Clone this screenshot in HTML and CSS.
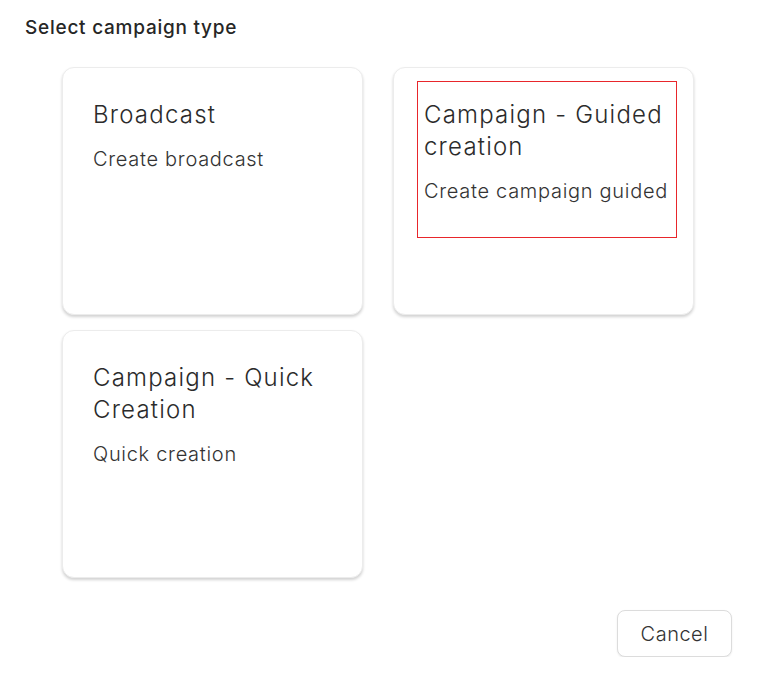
FILE: index.html
```html
<!DOCTYPE html>
<html lang="en">
<head>
    <meta charset="UTF-8">
    <meta name="viewport" content="width=device-width, initial-scale=1.0">
    <title>Select campaign type</title>
    <link rel="stylesheet" href="styles.css">
</head>
<body>
    <div class="dialog">
        <h2 class="dialog-title">Select campaign type</h2>

        <!-- Campaign type cards -->
        <div class="type-grid">
            <div class="type-card">
                <div class="type-content">
                    <h3 class="type-title">Broadcast</h3>
                    <p class="type-desc">Create broadcast</p>
                </div>
            </div>
            <div class="type-card">
                <div class="type-content focused">
                    <h3 class="type-title">Campaign - Guided creation</h3>
                    <p class="type-desc">Create campaign guided</p>
                </div>
            </div>
            <div class="type-card">
                <div class="type-content">
                    <h3 class="type-title">Campaign - Quick Creation</h3>
                    <p class="type-desc">Quick creation</p>
                </div>
            </div>
        </div>

        <div class="dialog-actions">
            <button class="btn-cancel">Cancel</button>
        </div>
    </div>
</body>
</html>
```

FILE: styles.css
```css
body {
    margin: 0; /* Remove default margin */
    background: #ffffff;
    font-family: 'Inter', 'Liberation Sans', sans-serif;
    color: #2b2b2b;
}

.dialog {
    padding: 15px 25px 0 25px;
}

.dialog-title {
    margin: 0;
    font-size: 19px;
    font-weight: 500;
    line-height: 26px;
    letter-spacing: 0.75px;
    color: #262626;
}

.type-grid {
    display: grid;
    grid-template-columns: 301px 301px;
    column-gap: 30px;
    row-gap: 15px;
    margin: 26px 0 0 37px;
}

.type-card {
    height: 248px;
    box-sizing: border-box;
    border: 1px solid #ececec;
    border-radius: 12px;
    background: #ffffff;
    box-shadow: 0 2px 3px rgba(0, 0, 0, 0.18);
    padding: 13px 16px 0 23px;
}

.type-content {
    height: 157px;
    box-sizing: border-box;
    border: 1px solid transparent;
    padding: 17px 6px 16px 6px;
}

.type-content.focused {
    border: 1px solid #e8262b; /* Keyboard focus highlight */
}

.type-title {
    margin: 0;
    font-size: 24px;
    font-weight: 300;
    line-height: 32px;
    letter-spacing: 1.2px;
    color: #2b2b2b;
}

.type-desc {
    margin: 14px 0 0 0;
    font-size: 20px;
    font-weight: 300;
    line-height: 28px;
    letter-spacing: 0.7px;
    color: #333333;
}

.dialog-actions {
    display: flex;
    justify-content: flex-end;
    margin-top: 32px;
}

.btn-cancel {
    width: 115px;
    height: 47px;
    border: 1px solid #dcdcdc;
    border-radius: 8px;
    background: #ffffff;
    box-shadow: 0 1px 2px rgba(0, 0, 0, 0.08);
    font-family: 'Inter', 'Liberation Sans', sans-serif;
    font-size: 20px;
    font-weight: 300;
    letter-spacing: 0.5px;
    color: #333333;
}
```
